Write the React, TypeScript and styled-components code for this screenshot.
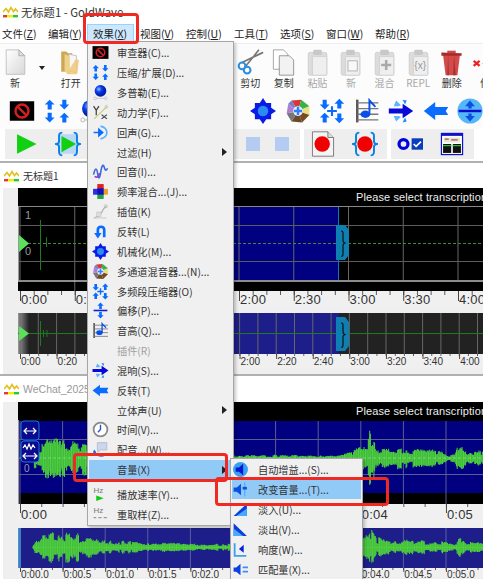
import React from "react";
import styled, { createGlobalStyle } from "styled-components";

const UI = `"Noto Sans CJK SC", "Liberation Sans", sans-serif`;
const Global = createGlobalStyle`
  html, body { margin: 0; padding: 0; background: #fff; }
  #root { width: 483px; height: 579px; overflow: hidden; }
`;

const Page = styled.div`
  position: relative; width: 483px; height: 579px; overflow: hidden;
  background: #fff; font-family: ${UI}; font-size: 11px; color: #222;
  display: flex; flex-direction: column;
`;
const TitleBar = styled.div`
  height: 22px; display: flex; align-items: center; padding: 1px 0 0 3px; gap: 3px;
  font-size: 11.3px; color: #333; flex: none;
`;
const MenuBar = styled.div`
  height: 20px; display: flex; flex: none; align-items: center; border-bottom: 1px solid #eee;
`;
const MenuBarItem = styled.span<{ $w: number; $active?: boolean }>`
  width: ${(p) => p.$w}px; flex: none; height: 19px; line-height: 19px; white-space: nowrap;
  font-size: 10.5px; padding-left: ${(p) => (p.$active ? 6 : 2)}px; box-sizing: border-box;
  margin-right: ${(p) => (p.$active ? 4 : 0)}px;
  background: ${(p) => (p.$active ? "#cce8ff" : "transparent")};
  outline: ${(p) => (p.$active ? "1px solid #99d1ff" : "none")}; outline-offset: -1px;
`;
const BigBar = styled.div`
  height: 48px; flex: none; display: flex; overflow: hidden; background: #fcfcfc; align-items: flex-start;
`;
const BigButton = styled.div<{ $w?: number; $off?: boolean }>`
  width: ${(p) => p.$w ?? 33.6}px; flex: none; display: flex; flex-direction: column; align-items: center;
  font-size: 10px; line-height: 13px; color: ${(p) => (p.$off ? "#a8a8a8" : "#333")}; white-space: nowrap;
  padding-top: 5px;
  svg { display: block; width: 27px; height: 27px; margin-bottom: 0; }
`;
const Spacer = styled.div<{ $w: number }>`
  width: ${(p) => p.$w}px; flex: none;
`;
const DropCaret = styled.div`
  width: 24px; flex: none; display: flex; justify-content: center; padding-top: 22px;
  &::after { content: ""; border: 3.5px solid transparent; border-top: 4px solid #222; }
`;
const IconBar = styled.div`
  height: 37px; flex: none; display: flex; align-items: center; padding-left: 5px; background: #fcfcfc; overflow: hidden;
`;
const IconSlot = styled.div`
  width: 34.5px; flex: none; display: flex; justify-content: center;
  svg { display: block; width: 26px; height: 26px; }
`;
const PlayBar = styled.div`
  height: 30px; flex: none; display: flex; gap: 4px; padding-left: 5px; margin-bottom: 2px; overflow: hidden;
`;
const PlayGroup = styled.div<{ $w: number }>`
  width: ${(p) => p.$w}px; flex: none; background: #eeeeee; display: flex; align-items: center;
`;
const PlaySlot = styled.div<{ $w: number }>`
  width: ${(p) => p.$w}px; flex: none; display: flex; justify-content: center;
  svg { display: block; width: 26px; height: 26px; }
`;
const BlueSquare = styled.div`
  width: 14px; height: 14px; background: #b4ccf2;
`;
const DocWindow = styled.section`
  flex: none; border-top: 2px solid #b0b0b0; overflow: hidden;
`;
const DocTitle = styled.div<{ $h: number; $dim?: boolean }>`
  height: ${(p) => p.$h}px; display: flex; align-items: center; gap: 4px; padding-left: 4px;
  font-size: ${(p) => (p.$dim ? 10.5 : 10)}px; color: ${(p) => (p.$dim ? "#999" : "#333")}; font-family: ${(p) => (p.$dim ? `"Liberation Sans", sans-serif` : UI)};
  white-space: nowrap;
`;
const DocBody = styled.div`
  display: flex; background: #efefef; margin-left: 3px;
`;
const Gutter = styled.div`
  width: 15px; flex: none;
`;
const Track = styled.div<{ $tail: number }>`
  width: 465px; flex: none; padding-bottom: ${(p) => p.$tail}px;
`;
const Banner = styled.div`
  height: 18px; background: #000; color: #eee; font: 11px/18px "Liberation Sans", sans-serif;
  letter-spacing: 0.1px; white-space: nowrap; padding-left: 338px; overflow: hidden;
`;
const Chart = styled.svg`
  display: block; width: 465px;
`;
const Ruler = styled.div<{ $step: number; $h: number; $big?: boolean; $tick: number }>`
  height: ${(p) => p.$h}px; display: flex; padding-left: 3px; overflow: hidden; white-space: nowrap;
  font: ${(p) => (p.$big ? "13px" : "10px")} "Liberation Sans", sans-serif; letter-spacing: ${(p) => (p.$big ? "0.2px" : "0")};
  color: #333; align-items: flex-end; background-color: #f0f0f0;
  background-image: linear-gradient(to right, #444 1px, transparent 1px), linear-gradient(to right, #555 1px, transparent 1px);
  background-repeat: repeat-x;
  background-size: ${(p) => p.$step}px ${(p) => p.$tick}px, ${(p) => p.$step / 4}px ${(p) => Math.ceil(p.$tick / 3)}px;
  background-position: 2px 0, 2px 0;
`;
const RulerCell = styled.span<{ $w: number; $big?: boolean }>`
  width: ${(p) => p.$w}px; flex: none; line-height: 1; padding-bottom: ${(p) => (p.$big ? 2 : 1)}px;
`;
const TrackGap = styled.div<{ $h: number }>`
  height: ${(p) => p.$h}px;
`;

const Popup = styled.div<{ $x: number; $y: number; $w: number; $pad: number }>`
  position: absolute; left: ${(p) => p.$x}px; top: ${(p) => p.$y}px; width: ${(p) => p.$w}px;
  box-sizing: border-box; background: #f0f0f0; border: 1px solid #a6a6a6;
  padding: ${(p) => p.$pad}px 1px; box-shadow: 2px 2px 3px rgba(0,0,0,.22);
`;
const Row = styled.div<{ $h: number; $on?: boolean; $off?: boolean; $text: number; $inset: number }>`
  position: relative; height: ${(p) => p.$h}px; display: flex; align-items: center;
  background: ${(p) => (p.$on ? "#91c9f7" : "transparent")};
  color: ${(p) => (p.$off ? "#a0a0a0" : "#333")}; font-size: 10.2px; white-space: nowrap;
  > i { width: ${(p) => p.$text}px; box-sizing: border-box; padding-left: ${(p) => p.$inset}px; flex: none; display: flex; font-style: normal; }
  svg { display: block; width: 17px; height: 17px; }
`;
const SubArrow = styled.span`
  position: absolute; right: 5px; top: 50%; margin-top: -4px;
  border: 4px solid transparent; border-left: 5px solid #222; border-right: 0;
`;
const MenuGap = styled.div`
  height: 5px;
`;
const Callout = styled.div<{ $x: number; $y: number; $w: number; $h: number }>`
  position: absolute; left: ${(p) => p.$x}px; top: ${(p) => p.$y}px; width: ${(p) => p.$w}px; height: ${(p) => p.$h}px;
  box-sizing: border-box; border: 3px solid #f02a22; border-radius: 4px; pointer-events: none;
`;

/* ---------- icons ---------- */
const B = "#0a6cff";
const V = (p: { children: React.ReactNode; vb?: string }) => <svg viewBox={p.vb ?? "0 0 32 32"}>{p.children}</svg>;

const Logo = () => (
  <svg width="15" height="12" viewBox="0 0 15 12" style={{ flex: "none" }}>
    <path d="M0 6 3 2.5 5.5 6 8 1.5 10.5 5.5 12.5 3 15 6" fill="none" stroke="#e3c020" strokeWidth="1.6" />
    <rect x="0" y="9" width="4" height="2.4" fill="#e33" /><rect x="4" y="9" width="6" height="2.4" fill="#ee0" /><rect x="10" y="9" width="5" height="2.4" fill="#2c3" />
  </svg>
);
const Doc = ({ c = "#fff" }: { c?: string }) => (
  <>
    <path d="M5 1h15l7 7v22H5z" fill={c} stroke="#bbb" />
    <path d="M20 1v7h7z" fill="#ddd" stroke="#aaa" />
  </>
);
const NewDoc = () => <V><defs><linearGradient id="nd" x1="0" y1="0" x2="1" y2="1"><stop offset="0" stopColor="#fff" /><stop offset="1" stopColor="#d8d8d8" /></linearGradient></defs><Doc c="url(#nd)" /></V>;
const Folder = () => (
  <V>
    <path d="M5 3h6l2 2h5v22H5z" fill="#cfa653" />
    <path d="M14 6l9 2v20l-9-2z" fill="#f6f6f6" stroke="#bbb" />
    <path d="M9 6l6 3v21l-6-3z" fill="#efd28a" />
    <path d="M22 12l4 1-2 17H11z" fill="#edc878" opacity=".85" />
  </V>
);
const Scissors = () => (
  <V>
    <path d="M26 1 9 22M31 4 6 16" stroke="#777" strokeWidth="2" fill="none" />
    <circle cx="6" cy="20" r="4" fill="none" stroke="#2a8fe0" strokeWidth="2.4" />
    <circle cx="12" cy="25" r="4" fill="none" stroke="#2a8fe0" strokeWidth="2.4" />
  </V>
);
const CopyIco = () => (
  <V>
    <path d="M4 1h12l5 5v18H4z" fill="#fff" stroke="#999" />
    <path d="M11 8h12l5 5v18H11z" fill="#f2f2f2" stroke="#888" />
  </V>
);
const Clip = ({ children }: { children?: React.ReactNode }) => (
  <V>
    <rect x="5" y="4" width="22" height="27" rx="2" fill="#dcdcdc" stroke="#ccc" />
    <rect x="11" y="1" width="10" height="6" rx="1" fill="#c8c8c8" />
    <path d="M10 9h17v22H10z" fill="#efefef" stroke="#d0d0d0" />
    {children}
  </V>
);
const Bin = () => (
  <V>
    <path d="M6 7h20l-3 24H9z" fill="#d24a4a" />
    <path d="M12 7l1 24h-2zM19 7l-1 24h3z" fill="#a83030" />
    <path d="M4 4l24 1v3H4z" fill="#a82a2a" />
    <path d="M11 2h10v3H11z" fill="#c94848" />
  </V>
);
const CutBrace = () => (
  <V>
    <path d="M2 14l7 6M9 14l-7 6" stroke="#e22" strokeWidth="2.6" />
    <path d="M22 3c-5 0-4 3-4 8s-1 5-3 6c2 1 3 1 3 6s-1 8 4 8" fill="none" stroke="#0a80e8" strokeWidth="2.6" />
  </V>
);
const StopBox = () => (
  <V>
    <rect x="1" y="4" width="30" height="24" fill="#000" />
    <circle cx="16" cy="16" r="8" fill="none" stroke="#d21f1f" strokeWidth="3" />
    <path d="M10.5 10.5 21.5 21.5" stroke="#d21f1f" strokeWidth="3" />
  </V>
);
const Arr = ({ x, y, up }: { x: number; y: number; up?: boolean }) => (
  <path
    d={up ? `M${x} ${y}l6 6h-3.5v6h-5v-6H${x - 6}z` : `M${x} ${y}l6 -6h-3.5v-6h-5v6H${x - 6}z`}
    fill={B}
  />
);
const Arrows4 = () => (
  <V>
    <Arr x={7} y={2} up /><Arr x={25} y={14} />
    <Arr x={7} y={30} /><Arr x={25} y={18} up />
  </V>
);
const OffsetIco = () => (
  <V>
    <Arr x={16} y={1} up /><Arr x={16} y={31} />
    <path d="M3 14.5h26v3H3z" fill="#0a20d8" />
  </V>
);
const Sphere = () => (
  <V>
    <defs><radialGradient id="sp" cx=".35" cy=".35"><stop offset="0" stopColor="#8ac4ff" /><stop offset=".5" stopColor="#0a40f0" /><stop offset="1" stopColor="#0020b0" /></radialGradient></defs>
    <circle cx="16" cy="13" r="11" fill="url(#sp)" />
    <circle cx="6" cy="27" r="2.5" fill="none" stroke="#aaa" /><circle cx="26" cy="27" r="2.5" fill="none" stroke="#aaa" />
    <path d="M9 27h14" stroke="#aaa" />
  </V>
);
const Dynamics = () => (
  <svg viewBox="0 0 32 32">
    <path d="M3 4l5 8 5-8M8 12v9" stroke="#444" strokeWidth="2.4" fill="none" />
    <path d="M18 20l10 8M28 20l-10 8" stroke="#444" strokeWidth="2.4" />
    <path d="M4 28 28 5" stroke="#c9c96a" strokeWidth="2" />
    <circle cx="27" cy="5" r="2.5" fill="none" stroke="#aaa" />
  </svg>
);
const EchoIco = () => (
  <V>
    <path d="M3 16h10M13 10l7 6-7 6z" fill={B} stroke={B} strokeWidth="3" />
    <path d="M16 4c8 2 12 6 12 12s-4 10-12 12" fill="none" stroke="#59b0ff" strokeWidth="3" />
  </V>
);
const LoopWave = () => (
  <V>
    <path d="M3 22c3-14 6-14 8 0s5 0 6-8 4-14 6-6 5 6 6 2" fill="none" stroke="#3a6ae0" strokeWidth="3" />
    <path d="M5 25c5 4 8 0 9-6" fill="none" stroke="#8a40d0" strokeWidth="3" />
  </V>
);
const ColorCross = () => (
  <V>
    <rect x="10" y="2" width="12" height="10" fill="#e02020" />
    <rect x="2" y="11" width="10" height="11" fill="#2a30e0" />
    <rect x="20" y="11" width="10" height="11" fill="#e8a020" />
    <rect x="10" y="20" width="12" height="10" fill="#20a040" />
    <rect x="10" y="10" width="12" height="12" fill="#1010c0" />
  </V>
);
const InterpIco = () => (
  <V>
    <path d="M4 28c10-2 12-6 14-10s3-8 9-12" fill="none" stroke="#aaa" strokeWidth="2" />
    <path d="M3 28h24" stroke="#ccc" strokeWidth="2" />
    <rect x="9" y="17" width="8" height="8" fill="#ddd" stroke="#bbb" />
    <circle cx="26" cy="6" r="3" fill="none" stroke="#aaa" />
  </V>
);
const UTurn = () => (
  <V>
    <path d="M11 24V13c0-8 12-8 12 0v14" fill="none" stroke={B} strokeWidth="5" />
    <path d="M11 29 4 19h14z" fill={B} />
  </V>
);
const Diamond = () => (
  <V>
    <path d="M16 0l4 6h6v6l6 4-6 4v6h-6l-4 6-4-6H6v-6l-6-4 6-4V6h6z" fill="#0a1ae8" />
    <circle cx="16" cy="16" r="6.5" fill="#2b8cf0" />
  </V>
);
const Wheel = () => (
  <V>
    <path d="M16 16 8 3l12-1z" fill="#d93636" /><path d="M16 16 20 2l10 8z" fill="#35b24a" />
    <path d="M16 16l14-6v11z" fill="#e8e080" /><path d="M16 16l14 5-9 9z" fill="#7a4a22" />
    <path d="M16 16l5 14-13-1z" fill="#6a4a2a" /><path d="M16 16 8 29 2 19z" fill="#777" />
    <path d="M16 16 2 19l2-12z" fill="#b080d0" /><path d="M16 16 4 7l4-4z" fill="#7080d0" />
    <circle cx="16" cy="16" r="6" fill="#eef" /><path d="M16 11v10M11 16h10" stroke="#2a80ff" strokeWidth="3" />
  </V>
);
const PlusArrows = () => (
  <V>
    <Arr x={7} y={14} /><Arr x={25} y={1} up /><Arr x={7} y={18} up /><Arr x={25} y={31} />
    <path d="M16 10v12M10 16h12" stroke={B} strokeWidth="2.6" />
  </V>
);
const Staff = () => (
  <V>
    <path d="M4 2v28" stroke="#555" strokeWidth="3" />
    <path d="M4 6h26M4 13h26M4 20h26M4 27h26" stroke="#777" strokeWidth="1.6" />
    <ellipse cx="14" cy="20" rx="6" ry="4.5" fill="#0a4fe8" />
    <path d="M19 20V3c3 4 6 5 7 8" fill="none" stroke="#0a4fe8" strokeWidth="2.4" />
  </V>
);
const SplitArrow = () => (
  <V>
    <path d="M1 13h17V7l13 9-13 9v-6H1z" fill="#0808d8" />
    <path d="M7 10l3-7 6 6-3 1zM7 22l3 7 6-6-3-1z" fill="#5ab6ff" />
    <path d="M18 2l5 1-2 5zM18 30l5-1-2-5z" fill="#1a8cff" />
  </V>
);
const LeftArrow = () => <V><path d="M1 16 15 5v6h16l-3 5 3 5H15v6z" fill={B} /></V>;
const UpDownCircle = () => (
  <V>
    <circle cx="16" cy="16" r="15.5" fill="#55b6f8" />
    <path d="M2 14.5h28v3H2z" fill="#0a0ad0" />
    <path d="M16 3l6 7h-4v3h-4v-3h-4zM16 29l6-7h-4v-3h-4v3h-4z" fill="#0a50e0" />
  </V>
);
const Play = () => <V><path d="M5 4 29 16 5 28z" fill="#10d010" /></V>;
const BraceShape = () => (
  <>
    <path d="M9 2C4 2 5 6 5 11s-1 4-4 5c3 1 4 1 4 5s-1 9 4 9" fill="none" stroke="#0a80e8" strokeWidth="2.4" />
    <path d="M23 2c5 0 4 4 4 9s1 4 4 5c-3 1-4 1-4 5s1 9-4 9" fill="none" stroke="#0a80e8" strokeWidth="2.4" />
  </>
);
const BracePlay = () => <V><rect x="5" y="4" width="22" height="24" fill="#b9d8f8" /><BraceShape /><path d="M8 6 26 16 8 26z" fill="#10d010" /></V>;
const RecDoc = () => <V><path d="M3 1h19l7 7v23H3z" fill="#f4f4f4" stroke="#666" /><path d="M22 1v7h7" fill="#ddd" stroke="#666" /><circle cx="15" cy="16" r="9.5" fill="#f00000" /></V>;
const BraceRec = () => <V><BraceShape /><circle cx="16" cy="16" r="9.5" fill="#f00000" /></V>;
const DotCheck = () => (
  <V>
    <circle cx="8" cy="16" r="5.5" fill="none" stroke="#0000e0" strokeWidth="4" />
    <rect x="18" y="9" width="14" height="14" fill="#0a3cc0" />
    <path d="M20.5 16l3 3 6-6" fill="none" stroke="#fff" strokeWidth="2" />
  </V>
);
const MiniWindow = () => (
  <V>
    <rect x="3" y="3" width="26" height="26" fill="#fff" stroke="#1010d0" strokeWidth="1.5" />
    <rect x="3" y="3" width="26" height="3" fill="#1010d0" />
    <rect x="6" y="8" width="20" height="6" fill="#dde8d8" /><path d="M7 10h5M15 11h8" stroke="#c44" strokeWidth="1.4" />
    <rect x="5" y="16" width="10" height="11" fill="#111" /><rect x="17" y="16" width="10" height="11" fill="#111" />
    <path d="M5 18h10M17 18h10" stroke="#2b3" strokeWidth="1.5" />
  </V>
);
const Clock = () => (
  <V>
    <circle cx="16" cy="16" r="13" fill="#fff" stroke="#8a8a8a" strokeWidth="3.4" />
    <path d="M16 7v9l-5 5" fill="none" stroke="#2255c8" strokeWidth="2.6" />
  </V>
);
const Dub = () => (
  <V>
    <path d="M10 3h18v14H16l-5 4v-4h-1z" fill="#ccd6ee" stroke="#9aa" />
    <path d="M4 18c2 10 14 12 20 8" fill="none" stroke={B} strokeWidth="3.4" />
    <path d="M8 22l-6 2 2-8z" fill={B} />
  </V>
);
const HzIco = ({ kind }: { kind: "play" | "dash" }) => (
  <V>
    <text x="3" y="14" fontFamily="Liberation Sans, sans-serif" fontSize="15" fill="#777">Hz</text>
    {kind === "play" ? <path d="M8 18l14 5-14 5z" fill="#12c812" /> : <path d="M3 22h5M12 22h6M22 22h6" stroke="#999" strokeWidth="2.4" />}
  </V>
);
const Speaker = ({ x = 0 }: { x?: number }) => <path d={`M${x + 3} 12h6l8-7v22l-8-7h-6z`} fill="#0a50e0" />;
const AutoGain = () => <V><circle cx="16" cy="16" r="14" fill="#38a0f4" /><path d="M7 12h6l8-7v22l-8-7H7z" fill="#0818d0" /></V>;
const ChangeVol = () => (
  <V>
    <Speaker />
    <path d="M24 3v26" stroke="#4aa8ff" strokeWidth="2" />
    <rect x="20" y="11" width="8" height="5" fill="#0a50e0" />
  </V>
);
const FadeIn = () => <V><path d="M3 28 28 5v23z" fill="#0a40d8" /><path d="M8 28 28 14v14z" fill="#4aa8ff" /></V>;
const FadeOut = () => <V><path d="M3 4v24h25z" fill="#0a40d8" /><path d="M3 14v14h18z" fill="#4aa8ff" /></V>;
const Loud = () => <V><path d="M5 4v24h22" fill="none" stroke="#3aa0f4" strokeWidth="3.4" /><path d="M22 7v15l-9-7z" fill="#0a20d8" /></V>;
const Match = () => <V><path d="M3 12h5l8-7v22l-8-7H3z" fill="#0a40e0" /><path d="M20 12h10M20 20h10" stroke="#3a90f4" strokeWidth="3" /></V>;

/* ---------- waveforms ---------- */
type Pt = [number, number];
const lerp = (pts: Pt[], x: number) => {
  for (let i = 1; i < pts.length; i++) {
    if (x <= pts[i][0]) {
      const [a, b] = [pts[i - 1], pts[i]];
      return a[1] + ((b[1] - a[1]) * (x - a[0])) / Math.max(b[0] - a[0], 0.001);
    }
  }
  return pts[pts.length - 1][1];
};
const wave = (pts: Pt[], cy: number, seed: number) => {
  let s = seed, d = "", burst = 1, left = 0;
  const rnd = () => ((s = (s * 16807) % 2147483647) / 2147483647);
  for (let x = pts[0][0]; x <= 483; x += 0.7) {
    if (left-- <= 0) { burst = 0.45 + 0.75 * rnd(); left = 1 + Math.floor(rnd() * 5); }
    const e = lerp(pts, x) * burst;
    const a = Math.max(e * (0.7 + 0.3 * rnd()), 1);
    const b = Math.max(e * (0.7 + 0.3 * rnd()), 1);
    d += `M${(x - 18).toFixed(2)} ${(cy - a).toFixed(1)}V${(cy + b + 0.5).toFixed(1)}`;
  }
  return d;
};
const ENV_MAIN: Pt[] = [[33, 0], [34, 10], [42, 16], [55, 20], [70, 18], [85, 15], [120, 8], [200, 4], [240, 3], [300, 3], [340, 3], [352, 6], [358, 10], [368, 15], [370, 27], [372, 27], [375, 13], [385, 10], [400, 9], [420, 9], [440, 7], [450, 3], [455, 4], [458, 12], [460, 17], [462, 17], [465, 10], [470, 8], [483, 7]];
const ENV_OVER: Pt[] = [[33, 0], [34, 8], [40, 12], [55, 14], [75, 13], [90, 9], [110, 6], [140, 5], [170, 4], [200, 3], [229, 3], [233, 2], [300, 2], [350, 3], [362, 10], [368, 13], [370, 19], [372, 19], [376, 10], [390, 7], [420, 6], [445, 5], [455, 4], [459, 9], [461, 11], [465, 6], [483, 5]];
const MAIN_D = wave(ENV_MAIN, 38, 77);
const OVER_D = wave(ENV_OVER, 19, 1234);

const xs = (step: number, start = 2) => Array.from({ length: Math.ceil(465 / step) }, (_, i) => start + i * step);

const Marker = ({ y, h }: { y: number; h: number }) => (
  <g>
    <path d={`M318 ${y}h9l4 5v${h - 10}l-4 5h-9z`} fill="#0e7fb2" />
    <path d={`M323 ${y + 6}c2.5 0 2 1 2 ${h / 2 - 8}c0 2 1 2 2 2.5c-1 .5-2 .5-2 2.5c0 ${h / 2 - 8} .5 ${h / 2 - 6}-2 ${h / 2 - 7}`} fill="none" stroke="#111" strokeWidth="1.2" />
  </g>
);

const MainOne = () => (
  <Chart height="85" viewBox="0 0 465 85">
    <rect width="465" height="85" fill="#000" />
    <rect x="90" y="1" width="231" height="73" fill="#000080" />
    {xs(54.75).map((x) => <path key={x} d={`M${x} 1V${x < 60 && x > 50 ? 85 : 74}`} stroke="#666" />)}
    {[19.5, 55.5].map((y) => <path key={y} d={`M0 ${y}H465`} stroke="#5c5c5c" />)}
    <path d="M0 37.5H465" stroke="#3d8a3d" strokeDasharray="3 2" />
    <path d="M22.5 14V64M28.5 31V41" stroke="#1f7a1f" />
    <path d="M320.5 1V74" stroke="#0a78c0" />
    <path d="M0 .5H465" stroke="#888" /><path d="M0 75H465" stroke="#bbb" strokeWidth="1.5" /><path d="M.5 0V75" stroke="#999" />
    <path d="M1 29 11 37.5 1 46z" fill="#5be05b" />
    <text x="7" y="13" fontFamily="Liberation Sans" fontSize="11" fill="#999">1</text>
    <text x="7" y="49" fontFamily="Liberation Sans" fontSize="11" fill="#999">0</text>
    <Marker y={19} h={35} />
  </Chart>
);
const OverOne = () => (
  <Chart height="41" viewBox="0 0 465 41">
    <defs><linearGradient id="fade" x1="0" x2="1"><stop offset="0" stopColor="#999" /><stop offset="1" stopColor="#222" /></linearGradient></defs>
    <rect width="465" height="41" fill="#222" />
    <rect width="11" height="41" fill="url(#fade)" />
    <rect x="90" width="231" height="41" fill="#1e1e8a" />
    {xs(18.3).map((x) => <path key={x} d={`M${x} 0V41`} stroke="#666" />)}
    <path d="M0 20.5H465" stroke="#1f7a1f" />
    <path d="M22.5 8V33M25.5 17V24M29 17V24" stroke="#1f7a1f" />
    <path d="M1 13 11 20.5 1 28z" fill="#5be05b" />
    <Marker y={4} h={34} />
  </Chart>
);
const MainTwo = () => (
  <Chart height="84" viewBox="0 0 465 84">
    <rect width="465" height="84" fill="#000" />
    <rect y="1" width="465" height="72" fill="#000080" />
    {xs(42.6).map((x) => <path key={x} d={`M${x} 1V84`} stroke="#5c5c90" />)}
    {[19.5, 54.5].map((y) => <path key={y} d={`M0 ${y}H465`} stroke="#5c5c90" />)}
    <path d={MAIN_D} stroke="#4ed23a" strokeWidth="1" />
    <path d="M0 38H465" stroke="#a6e8a0" strokeDasharray="3 2" opacity=".55" />
    <path d="M.5 0V84" stroke="#999" />
    <rect x="3" y="1" width="18" height="19" rx="3" fill="#0a0a90" stroke="#1a78d8" />
    <path d="M7 11h10M9 8l-3 3 3 3M15 8l3 3-3 3" fill="none" stroke="#fff" strokeWidth="1.2" />
    <rect x="3" y="21" width="18" height="21" rx="3" fill="#0a0a90" stroke="#1a78d8" />
    <path d="M5 28l2-3 2 4 2-5 2 5 2-4 2 3" fill="none" stroke="#fff" strokeWidth="1.2" />
    <path d="M6 36h12M8 33l-3 3 3 3M16 33l3 3-3 3" fill="none" stroke="#fff" strokeWidth="1.2" />
    <text x="6" y="52" fontFamily="Liberation Sans" fontSize="10" fill="#99a">0</text>
  </Chart>
);
const OverTwo = () => (
  <Chart height="40" viewBox="0 0 465 40">
    <rect width="465" height="40" fill="#1e1e8a" />
    <rect width="3" height="40" fill="#3a9ad8" />
    {xs(42.6).map((x) => <path key={x} d={`M${x} 0V40`} stroke="#5c5ca0" />)}
    <path d="M15 19.5H465" stroke="#4ed23a" />
    <path d={OVER_D} stroke="#4ed23a" strokeWidth="1" />
  </Chart>
);

/* ---------- data ---------- */
const MENUBAR: [string, string, number][] = [
  ["文件(", "Z", 46], ["编辑(", "Y", 41], ["效果(", "X", 47], ["视图(", "V", 46], ["控制(", "U", 48],
  ["工具(", "T", 46], ["选项(", "S", 46], ["窗口(", "W", 49], ["帮助(", "R", 60],
];
type Item = { t: string; I?: React.FC; off?: boolean; sub?: boolean; on?: boolean; gapAfter?: boolean };
const MENU: Item[] = [
  { t: "审查器(C)...", I: StopBox }, { t: "压缩/扩展(D)...", I: Arrows4 }, { t: "多普勒(E)...", I: Sphere },
  { t: "动力学(F)...", I: Dynamics }, { t: "回声(G)...", I: EchoIco }, { t: "过滤(H)", sub: true },
  { t: "回音(I)...", I: LoopWave }, { t: "频率混合...(J)...", I: ColorCross }, { t: "插值(K)", I: InterpIco },
  { t: "反转(L)", I: UTurn }, { t: "机械化(M)...", I: Diamond }, { t: "多通道混音器...(N)...", I: Wheel },
  { t: "多频段压缩器(O)", I: PlusArrows }, { t: "偏移(P)...", I: OffsetIco }, { t: "音高(Q)...", I: Staff },
  { t: "插件(R)", off: true }, { t: "混响(S)...", I: SplitArrow }, { t: "反转(T)", I: LeftArrow },
  { t: "立体声(U)", sub: true }, { t: "时间(V)...", I: Clock }, { t: "配音...(W)...", I: Dub },
  { t: "音量(X)", sub: true, on: true, gapAfter: true },
  { t: "播放速率(Y)...", I: () => <HzIco kind="play" /> }, { t: "重取样(Z)...", I: () => <HzIco kind="dash" /> },
];
const SUBMENU: Item[] = [
  { t: "自动增益...(S)...", I: AutoGain }, { t: "改变音量...(T)...", I: ChangeVol, on: true },
  { t: "淡入(U)...", I: FadeIn }, { t: "淡出(V)...", I: FadeOut }, { t: "响度(W)...", I: Loud }, { t: "匹配量(X)...", I: Match },
];
const ICON_ROW: React.FC[] = [Diamond, Wheel, PlusArrows, Staff, SplitArrow, LeftArrow, UpDownCircle];

/* Labels that sit wholly under the open menu are left empty so the cells keep their spacing. */
const t1 = ["0:00", "0:30", "", "", "2:00", "2:30", "3:00", "3:30", "4:00"];
const t1s = ["0:00", "0:20", "", "", "", "", "2:00", "2:20", "2:40", "3:00", "3:20", "3:40", "4:00"];
const t2 = ["0:00", "", "", "", "0:04", "0:05"];
const t2s = ["0:00.0", "0:00.5", "0:01.0", "0:01.5", "0:02.0", "", "", "", "0:04.0", "0:04.5", "0:05.0", "0:05.5"];

const MenuRows = ({ items, h, text, inset }: { items: Item[]; h: number; text: number; inset: number }) => (
  <>
    {items.map(({ t, I, off, sub, on, gapAfter }) => (
      <React.Fragment key={t}>
        <Row $h={h} $on={on} $off={off} $text={text} $inset={inset}>
          <i>{I ? <I /> : null}</i>
          {t}
          {sub && <SubArrow />}
        </Row>
        {gapAfter && <MenuGap />}
      </React.Fragment>
    ))}
  </>
);

export default function App() {
  return (
    <Page>
      <Global />
      <TitleBar><Logo />无标题1 - GoldWave</TitleBar>
      <MenuBar>
        {MENUBAR.map(([a, k, w]) => (
          <MenuBarItem key={k} $w={w} $active={k === "X"}>{a}<u>{k}</u>)</MenuBarItem>
        ))}
      </MenuBar>
      <BigBar>
        <BigButton $w={30}><NewDoc />新</BigButton>
        <DropCaret />
        <BigButton><Folder />打开</BigButton>
        <Spacer $w={145.8} />
        <BigButton><Scissors />剪切</BigButton>
        <BigButton><CopyIco />复制</BigButton>
        <BigButton $off><Clip />粘贴</BigButton>
        <BigButton $off><Clip><rect x="13" y="14" width="11" height="12" fill="#f8f8f8" stroke="#aaa" /></Clip>新</BigButton>
        <BigButton $off><Clip><path d="M18 13v12M12 19h12" stroke="#aaa" strokeWidth="3" /></Clip>混合</BigButton>
        <BigButton $off><Clip><text x="11" y="24" fontFamily="Liberation Sans" fontSize="12" fill="#999">{"{x}"}</text></Clip>REPL</BigButton>
        <BigButton><Bin />删除</BigButton>
        <BigButton><CutBrace />修</BigButton>
      </BigBar>
      <IconBar>
        <IconSlot><StopBox /></IconSlot>
        <IconSlot><Arrows4 /></IconSlot>
        <IconSlot><Sphere /></IconSlot>
        <Spacer $w={137.5} />
        {ICON_ROW.map((I, i) => <IconSlot key={i}><I /></IconSlot>)}
      </IconBar>
      <PlayBar>
        <PlayGroup $w={295}>
          <PlaySlot $w={42}><Play /></PlaySlot>
          <PlaySlot $w={41}><BracePlay /></PlaySlot>
          <Spacer $w={147} />
          <PlaySlot $w={36}><BlueSquare /></PlaySlot>
          <PlaySlot $w={22}><BlueSquare /></PlaySlot>
        </PlayGroup>
        <PlayGroup $w={83}>
          <PlaySlot $w={38}><RecDoc /></PlaySlot>
          <PlaySlot $w={45}><BraceRec /></PlaySlot>
        </PlayGroup>
        <PlayGroup $w={83}>
          <PlaySlot $w={38}><DotCheck /></PlaySlot>
          <PlaySlot $w={45}><MiniWindow /></PlaySlot>
        </PlayGroup>
      </PlayBar>

      <DocWindow>
        <DocTitle $h={25}><Logo />无标题1</DocTitle>
        <DocBody>
          <Gutter />
          <Track $tail={6}>
            <Banner>Please select transcription</Banner>
            <MainOne />
            <Ruler $step={54.75} $h={17} $big $tick={10}>
              {t1.map((x, i) => <RulerCell key={i} $big $w={54.75}>{x}</RulerCell>)}
            </Ruler>
            <TrackGap $h={5} />
            <OverOne />
            <Ruler $step={36.6} $h={14} $tick={5}>
              {t1s.map((x, i) => <RulerCell key={i} $w={36.6}>{x}</RulerCell>)}
            </Ruler>
          </Track>
        </DocBody>
      </DocWindow>

      <DocWindow>
        <DocTitle $h={26} $dim><Logo />WeChat_2025</DocTitle>
        <DocBody>
          <Gutter />
          <Track $tail={0}>
            <Banner>Please select transcription</Banner>
            <MainTwo />
            <Ruler $step={85.2} $h={19} $big $tick={9}>
              {t2.map((x, i) => <RulerCell key={i} $big $w={85.2}>{x}</RulerCell>)}
            </Ruler>
            <TrackGap $h={5} />
            <OverTwo />
            <Ruler $step={42.6} $h={13} $tick={4}>
              {t2s.map((x, i) => <RulerCell key={i} $w={42.6}>{x}</RulerCell>)}
            </Ruler>
          </Track>
        </DocBody>
      </DocWindow>

      <Popup $x={87} $y={41} $w={147} $pad={1}>
        <MenuRows items={MENU} h={19.85} text={28} inset={3} />
      </Popup>
      <Popup $x={230} $y={458} $w={133} $pad={0}>
        <MenuRows items={SUBMENU} h={20} text={26} inset={0} />
      </Popup>
      <Callout $x={83} $y={13} $w={56} $h={31} />
      <Callout $x={73} $y={453} $w={155} $h={29} />
      <Callout $x={215} $y={477} $w={174} $h={29} />
    </Page>
  );
}
